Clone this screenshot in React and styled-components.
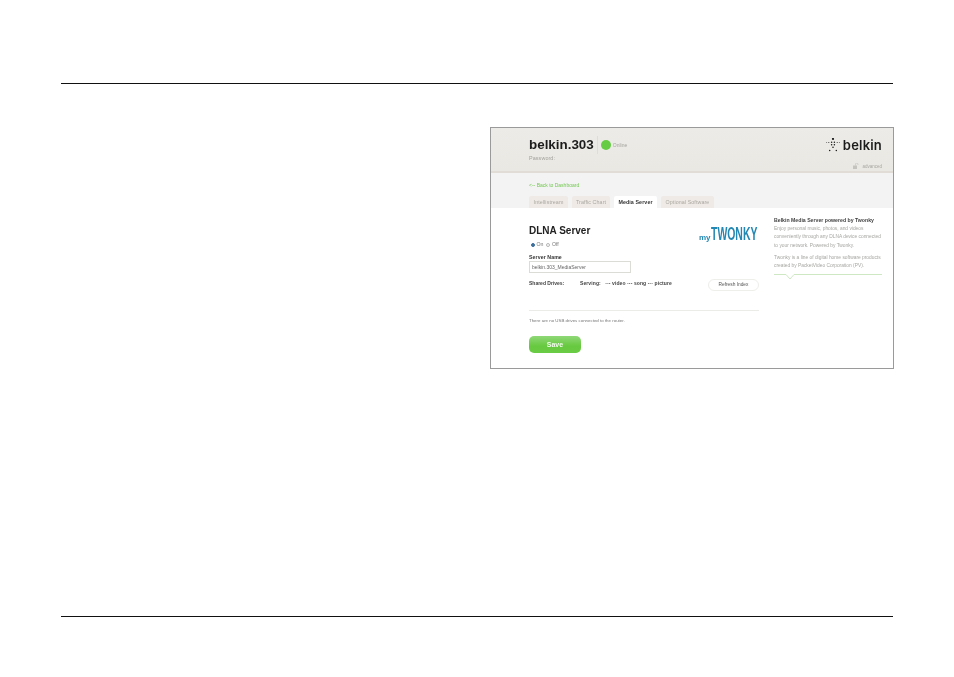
import React from "react";
import styled, { createGlobalStyle } from "styled-components";

const Global = createGlobalStyle`
  html, body { margin: 0; padding: 0; background: #fff; }
  body { font-family: "Liberation Sans", Arial, sans-serif; }
`;
const Page = styled.div`
  width: 954px; height: 677px; box-sizing: border-box; padding: 83px 61px 0 61px;
  display: flex; flex-direction: column;
`;
const Rule = styled.div`height: 1px; background: #111; width: 832px; flex: none;`;
const FrameRow = styled.div`
  flex: none; height: 532px; padding-top: 43px; box-sizing: border-box;
  display: flex; justify-content: flex-end; margin-right: -1px;
`;
const Frame = styled.div`
  width: 404px; height: 242px; box-sizing: border-box; border: 1px solid #9a9a9a;
  display: flex; flex-direction: column; background: #fff; overflow: hidden;
`;
const Blur = styled.div`
  filter: blur(0.35px); display: flex; flex-direction: column; height: 100%;
`;
const Header = styled.div`
  height: 45px; flex: none; box-sizing: border-box; background: linear-gradient(#ecebe7, #eae8e3);
  border-bottom: 2px solid #e2dcd6; padding: 8px 11px 0 38px;
  display: flex; justify-content: space-between;
`;
const HeaderLeft = styled.div`display: flex; flex-direction: column;`;
const TitleRow = styled.div`display: flex; align-items: center; height: 18px;`;
const RouterName = styled.div`
  font-size: 13.4px; font-weight: 700; color: #1c1c1c; padding-right: 3px;
  border-right: 1px solid #deddd8; line-height: 18px;
`;
const StatusDot = styled.span`
  width: 10px; height: 10px; border-radius: 50%; background: #66cc44; margin: 0 2px 0 3px;
`;
const StatusText = styled.span`font-size: 5px; color: #a5a49e;`;
const PasswordLabel = styled.div`font-size: 5.4px; color: #a3a29b; margin-top: 1px; letter-spacing: 0.1px;`;
const HeaderRight = styled.div`display: flex; flex-direction: column; align-items: flex-end;`;
const LogoRow = styled.div`display: flex; align-items: center; gap: 3px; height: 16px; margin-top: 1px;`;
const LogoText = styled.span`font-size: 13px; font-weight: 600; color: #1b1b1b; font-family: "Inter", "Liberation Sans", sans-serif; letter-spacing: 0.2px; line-height: 16px;`;
const AdvancedRow = styled.div`display: flex; align-items: center; gap: 3px; margin-top: 10px;`;
const AdvancedText = styled.span`font-size: 4.5px; color: #a8a7a0;`;
const SubHeader = styled.div`
  height: 35px; flex: none; box-sizing: border-box; background: #f3f3f4; padding: 9px 0 0 38px;
  display: flex; flex-direction: column; justify-content: space-between;
`;
const BackLink = styled.div`font-size: 5px; color: #72c84f; line-height: 7px;`;
const Tabs = styled.div`display: flex; gap: 4px; height: 12px;`;
const Tab = styled.div`
  height: 12px; width: ${p => p.$w}px; border-radius: 2px 2px 0 0;
  background: ${p => (p.$active ? "#ffffff" : "#efeae6")};
  color: ${p => (p.$active ? "#333" : "#aaa69f")};
  font-size: 5.3px; font-weight: ${p => (p.$active ? 700 : 400)};
  display: flex; align-items: center; justify-content: center; letter-spacing: 0.1px;
`;
const Body = styled.div`flex: 1; display: flex; padding: 7px 11px 0 38px; gap: 15px; background: #fff;`;
const Main = styled.div`width: 230px; flex: none; display: flex; flex-direction: column;`;
const TitleBlock = styled.div`display: flex; justify-content: space-between; height: 39px;`;
const TitleCol = styled.div`display: flex; flex-direction: column; padding-top: 9px;`;
const H1 = styled.div`font-size: 10px; font-weight: 700; color: #222; line-height: 13px;`;
const Radios = styled.div`display: flex; align-items: center; gap: 3px; margin: 4px 0 0 2px; font-size: 5.2px; color: #777; line-height: 7px;`;
const Radio = styled.span`
  width: 4px; height: 4px; border-radius: 50%; box-sizing: border-box;
  border: 1px solid ${p => (p.$on ? "#3d6f9c" : "#b5b5b5")};
  background: ${p => (p.$on ? "#3d6f9c" : "#fff")};
  margin-right: -1.5px;
`;
const Twonky = styled.div`
  display: flex; align-items: baseline; color: #2387b4; margin-top: 8px; height: 22px; width: 60px;
  line-height: 22px; white-space: nowrap;
`;
const TwonkyMy = styled.span`font-size: 8px; font-weight: 700; width: 12px; flex: none;`;
const TwonkyName = styled.span`
  font-size: 19px; font-weight: 700; display: inline-block; transform: scaleX(0.55); transform-origin: left center;
`;
const FieldLabel = styled.div`font-size: 5.2px; font-weight: 700; color: #333; line-height: 7px; letter-spacing: 0.1px;`;
const NameInput = styled.div`
  width: 102px; height: 12px; box-sizing: border-box; border: 1px solid #dcdcd6;
  font-size: 5px; color: #666; padding-left: 2px; display: flex; align-items: center;
`;
const DrivesRow = styled.div`display: flex; align-items: flex-start; height: 12px; margin-top: 6px; font-size: 5px; font-weight: 700; color: #444; line-height: 8px;`;
const DriveLabel = styled.span`width: 51px; flex: none;`;
const Serving = styled.span`flex: 1; white-space: pre; letter-spacing: 0.1px;`;
const RefreshButton = styled.div`
  width: 51px; height: 12px; box-sizing: border-box; border: 1px solid #eeeeea; border-radius: 6px;
  display: flex; align-items: center; justify-content: center; font-size: 4.8px; font-weight: 400; color: #555;
`;
const Divider = styled.div`height: 1px; background: #ebebe7; margin-top: 19px;`;
const Note = styled.div`font-size: 4.4px; color: #777; line-height: 7px; margin-top: 6px;`;
const SaveButton = styled.div`
  width: 52px; height: 17px; margin-top: 12px; border-radius: 5px;
  background: linear-gradient(#90d878, #67c93f 60%, #6acb45);
  color: #f3fbee; font-size: 7px; font-weight: 700;
  display: flex; align-items: center; justify-content: center;
`;
const Aside = styled.div`width: 108px; flex: none; display: flex; flex-direction: column; padding-top: 1px;`;
const AsideTitle = styled.div`font-size: 5.2px; font-weight: 700; color: #444; line-height: 8.5px; white-space: nowrap;`;
const AsideText = styled.div`
  font-size: 4.85px; color: #a6a6a2; line-height: 8.5px; white-space: pre; margin-bottom: ${p => p.$mb || 0}px;
`;
const Notch = styled.svg`display: block;`;

function DotLogo() {
  const dots = [[7,1,1.1],[5.6,4.3,.75],[8.4,4.3,.75],[5.6,6.7,.75],[8.4,6.7,.75],[0.7,4.5,.45],[2.8,4.5,.5],[11.2,4.5,.5],[13.3,4.5,.45],[7,9.3,.8],[3.7,12.6,.75],[10.3,12.6,.75]];
  return (
    <svg width="14" height="14" viewBox="0 0 14 14">
      {dots.map(([x, y, r], i) => <circle key={i} cx={x} cy={y} r={r} fill="#1b1b1b" />)}
    </svg>
  );
}
function LockIcon() {
  return (
    <svg width="6" height="6" viewBox="0 0 6 6">
      <rect x="0" y="2.5" width="4" height="3.5" fill="#c4c3bd" />
      <path d="M2.5 2.5V1.2a1.2 1.2 0 0 1 2.4 0V2" fill="none" stroke="#c4c3bd" strokeWidth=".7" />
    </svg>
  );
}

export default function App() {
  return (
    <Page>
      <Global />
      <Rule />
      <FrameRow>
        <Frame>
          <Blur>
            <Header>
              <HeaderLeft>
                <TitleRow>
                  <RouterName>belkin.303</RouterName>
                  <StatusDot />
                  <StatusText>Online</StatusText>
                </TitleRow>
                <PasswordLabel>Password:</PasswordLabel>
              </HeaderLeft>
              <HeaderRight>
                <LogoRow><DotLogo /><LogoText>belkin</LogoText></LogoRow>
                <AdvancedRow><LockIcon /><AdvancedText>advanced</AdvancedText></AdvancedRow>
              </HeaderRight>
            </Header>
            <SubHeader>
              <BackLink>&lt;-- Back to Dashboard</BackLink>
              <Tabs>
                <Tab $w={39}>Intellistream</Tab>
                <Tab $w={38}>Traffic Chart</Tab>
                <Tab $w={43} $active>Media Server</Tab>
                <Tab $w={53}>Optional Software</Tab>
              </Tabs>
            </SubHeader>
            <Body>
              <Main>
                <TitleBlock>
                  <TitleCol>
                    <H1>DLNA Server</H1>
                    <Radios><Radio $on /> On <Radio /> Off</Radios>
                  </TitleCol>
                  <Twonky>
                    <TwonkyMy>my</TwonkyMy>
                    <TwonkyName>TWONKY</TwonkyName>
                  </Twonky>
                </TitleBlock>
                <FieldLabel>Server Name</FieldLabel>
                <NameInput>belkin.303_MediaServer</NameInput>
                <DrivesRow>
                  <DriveLabel>Shared Drives:</DriveLabel>
                  <Serving>Serving:   --- video --- song --- picture</Serving>
                  <RefreshButton>Refresh Index</RefreshButton>
                </DrivesRow>
                <Divider />
                <Note>There are no USB drives connected to the router.</Note>
                <SaveButton>Save</SaveButton>
              </Main>
              <Aside>
                <AsideTitle>Belkin Media Server powered by Twonky</AsideTitle>
                <AsideText $mb={3.5}>{"Enjoy personal music, photos, and videos\nconveniently through any DLNA device connected\nto your network. Powered by Twonky."}</AsideText>
                <AsideText $mb={3}>{"Twonky is a line of digital home software products\ncreated by PacketVideo Corporation (PV)."}</AsideText>
                <Notch width="108" height="7" viewBox="0 0 108 7">
                  <path d="M0 .5H12L16 5 20 .5H108" fill="none" stroke="#cfe8c4" strokeWidth="1" />
                </Notch>
              </Aside>
            </Body>
          </Blur>
        </Frame>
      </FrameRow>
      <Rule />
    </Page>
  );
}
